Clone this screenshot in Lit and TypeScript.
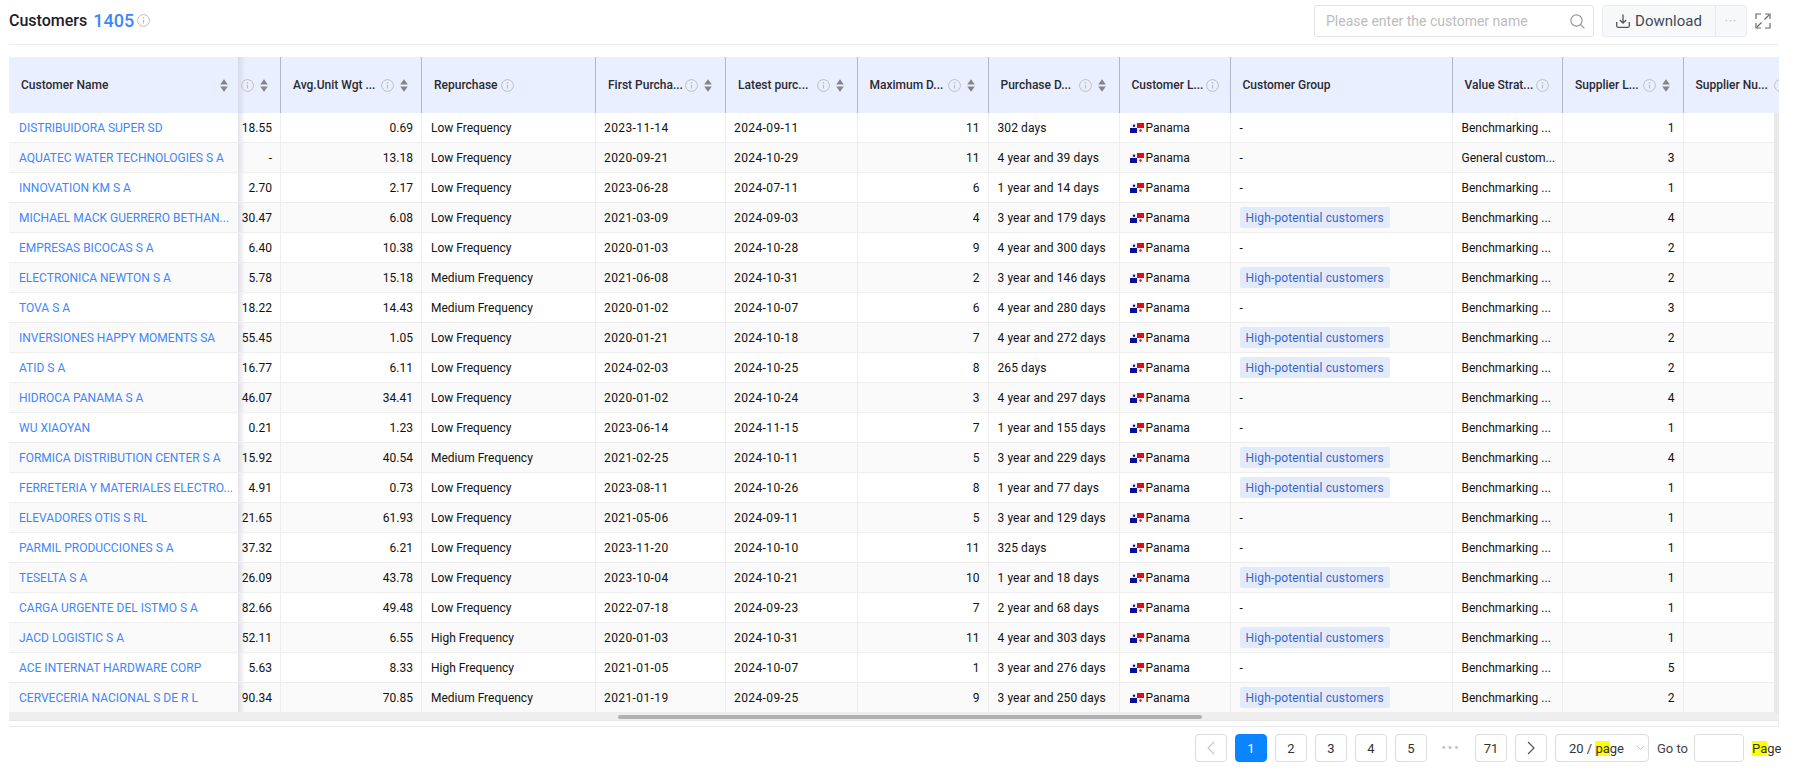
import { LitElement, html, css, svg } from "lit";
import { customElement } from "lit/decorators.js";

type R = [string, string, string, string, string, string, string, string, boolean, string, string];
const B = "Benchmarking ...";
const rows: R[] = [
  ["DISTRIBUIDORA SUPER SD","18.55","0.69","Low Frequency","2023-11-14","2024-09-11","11","302 days",false,B,"1"],
  ["AQUATEC WATER TECHNOLOGIES S A","-","13.18","Low Frequency","2020-09-21","2024-10-29","11","4 year and 39 days",false,"General custom...","3"],
  ["INNOVATION KM S A","2.70","2.17","Low Frequency","2023-06-28","2024-07-11","6","1 year and 14 days",false,B,"1"],
  ["MICHAEL MACK GUERRERO BETHAN...","30.47","6.08","Low Frequency","2021-03-09","2024-09-03","4","3 year and 179 days",true,B,"4"],
  ["EMPRESAS BICOCAS S A","6.40","10.38","Low Frequency","2020-01-03","2024-10-28","9","4 year and 300 days",false,B,"2"],
  ["ELECTRONICA NEWTON S A","5.78","15.18","Medium Frequency","2021-06-08","2024-10-31","2","3 year and 146 days",true,B,"2"],
  ["TOVA S A","18.22","14.43","Medium Frequency","2020-01-02","2024-10-07","6","4 year and 280 days",false,B,"3"],
  ["INVERSIONES HAPPY MOMENTS SA","55.45","1.05","Low Frequency","2020-01-21","2024-10-18","7","4 year and 272 days",true,B,"2"],
  ["ATID S A","16.77","6.11","Low Frequency","2024-02-03","2024-10-25","8","265 days",true,B,"2"],
  ["HIDROCA PANAMA S A","46.07","34.41","Low Frequency","2020-01-02","2024-10-24","3","4 year and 297 days",false,B,"4"],
  ["WU XIAOYAN","0.21","1.23","Low Frequency","2023-06-14","2024-11-15","7","1 year and 155 days",false,B,"1"],
  ["FORMICA DISTRIBUTION CENTER S A","15.92","40.54","Medium Frequency","2021-02-25","2024-10-11","5","3 year and 229 days",true,B,"4"],
  ["FERRETERIA Y MATERIALES ELECTRO...","4.91","0.73","Low Frequency","2023-08-11","2024-10-26","8","1 year and 77 days",true,B,"1"],
  ["ELEVADORES OTIS S RL","21.65","61.93","Low Frequency","2021-05-06","2024-09-11","5","3 year and 129 days",false,B,"1"],
  ["PARMIL PRODUCCIONES S A","37.32","6.21","Low Frequency","2023-11-20","2024-10-10","11","325 days",false,B,"1"],
  ["TESELTA S A","26.09","43.78","Low Frequency","2023-10-04","2024-10-21","10","1 year and 18 days",true,B,"1"],
  ["CARGA URGENTE DEL ISTMO S A","82.66","49.48","Low Frequency","2022-07-18","2024-09-23","7","2 year and 68 days",false,B,"1"],
  ["JACD LOGISTIC S A","52.11","6.55","High Frequency","2020-01-03","2024-10-31","11","4 year and 303 days",true,B,"1"],
  ["ACE INTERNAT HARDWARE CORP","5.63","8.33","High Frequency","2021-01-05","2024-10-07","1","3 year and 276 days",false,B,"5"],
  ["CERVECERIA NACIONAL S DE R L","90.34","70.85","Medium Frequency","2021-01-19","2024-09-25","9","3 year and 250 days",true,B,"2"],
];

const info = svg`<svg class="info" viewBox="0 0 13 13"><circle cx="6.5" cy="6.5" r="5.9" fill="none" stroke="#bfbfbf"/><circle cx="6.5" cy="3.9" r=".8" fill="#bfbfbf"/><path d="M6.5 5.8v3.7" stroke="#bfbfbf" stroke-width="1.2" fill="none"/></svg>`;
const sort = svg`<svg class="sort" viewBox="0 0 8 13"><path d="M4 0.3 7.8 5.4H.2z" fill="#858585"/><path d="M4 12.7.2 7.6H7.8z" fill="#858585"/></svg>`;
const flag = svg`<svg class="flag" viewBox="0 0 14 10"><rect width="14" height="10" fill="#f4f4f8"/><rect x="7" width="7" height="5" fill="#d8101c"/><rect y="5" width="7" height="5" fill="#0a108f"/><circle cx="4" cy="2.7" r="1.2" fill="#0a108f"/><circle cx="10.5" cy="7.5" r="1.2" fill="#d8101c"/></svg>`;

interface H { t: string; i?: boolean; s?: boolean; cls?: string }
const heads: H[] = [
  { t: "Customer Name", s: true },
  { t: "", i: true, s: true },
  { t: "Avg.Unit Wgt ...", i: true, s: true },
  { t: "Repurchase", i: true, cls: "tight" },
  { t: "First Purcha...", i: true, s: true },
  { t: "Latest purc...", i: true, s: true },
  { t: "Maximum D...", i: true, s: true },
  { t: "Purchase D...", i: true, s: true },
  { t: "Customer L...", i: true, cls: "tight" },
  { t: "Customer Group" },
  { t: "Value Strat...", i: true },
  { t: "Supplier L...", i: true, s: true },
  { t: "Supplier Nu...", i: true },
];

@customElement("app-root")
export class AppRoot extends LitElement {
  static styles = css`
    :host { display: block; width: 1794px; height: 773px; overflow: hidden; background: #fff; font-family: Roboto, "Liberation Sans", sans-serif; font-size: 12px; color: #111; }
    .page { padding: 0 15px 0 9px; }
    .top { display: flex; align-items: center; border-bottom: 1px solid #ececec; padding-bottom: 2px; box-sizing: border-box; height: 45px; margin-bottom: 12px; }
    .title { font-size: 16px; font-weight: 500; color: #1c1c2b; margin-bottom: 2px; }
    .count { font-size: 18px; font-weight: 500; color: #3d86ff; margin-left: 6px; margin-bottom: 2px; }
    .top .info { margin-left: 3px; margin-bottom: 2px; }
    .spacer { flex: 1; }
    .search { width: 280px; height: 32px; box-sizing: border-box; border: 1px solid #e3e3e3; border-radius: 3px; display: flex; align-items: center; padding: 0 8px 0 11px; color: #bdbdbd; font-size: 14px; justify-content: space-between; }
    .btn { margin-left: 8px; display: flex; height: 32px; box-sizing: border-box; border: 1px solid #ebedf0; border-radius: 3px; background: #f7f8fa; align-items: center; color: #3f4a59; font-size: 15px; }
    .dl { width: 113px; box-sizing: border-box; height: 100%; display: flex; align-items: center; justify-content: center; gap: 5px; border-right: 1px solid #e6e8eb; }
    .more { width: 30px; text-align: center; color: #bbb; letter-spacing: 1px; font-size: 12px; }
    .expand { margin: 0 8px; width: 16px; height: 16px; flex: none; }

    .table { position: relative; width: 1770px; overflow: hidden; }
    .row { display: grid; grid-template-columns: 229px 43px 141px 174px 130px 131.5px 131px 131px 111px 222px 110.5px 120.5px 95.5px; }
    .head { height: 56px; background: #e9effe; }
    .hc { display: flex; align-items: center; padding: 0 13px 0 12px; gap: 6px; border-right: 1px solid #b4b7c9; min-width: 0; overflow: hidden; font-weight: 500; font-size: 12px; color: #2a2a33; white-space: nowrap; position: relative; box-sizing: border-box; height: 56px; }
    .hc.tight { gap: 3px; }
    .hc span { flex: 1; min-width: 0; }
    .hc.tight span { flex: none; }
    .hc.first { background: #e9effe; padding-right: 10px; border-right: 0; }
    .hc.stub { justify-content: flex-end; padding: 0 12px 0 0; }
    .hc.stub span { display: none; }
    .hc.last { border-right: 0; padding-right: 0; }
    .hc.last span { flex: none; }
    .body .row { height: 30px; }
    .body .row:nth-child(even) > div { background: #fafafa; }
    .c { display: flex; align-items: center; padding: 0 9px; border-right: 1px solid #eeeeee; border-bottom: 1px solid #eeeeee; box-sizing: border-box; height: 30px; min-width: 0; white-space: nowrap; overflow: hidden; background: #fff; }
    .c.num { justify-content: flex-end; padding-right: 8px; }
    .c.stub { padding-left: 0; }
    .c.name { padding: 0 5px 0 10px; color: #3d86ff; border-right: 0; }
    .c.date { letter-spacing: .4px; padding-left: 8px; }
    .c.dur { letter-spacing: .1px; }
    .c.loc { padding-left: 10px; }
    .c.last { border-right: 0; }
    .first-col { position: relative; z-index: 1; overflow: visible; }
    .first-col::after { content: ""; position: absolute; top: 0; bottom: 0; right: -7px; width: 7px; background: linear-gradient(to right, rgba(190,190,205,.45), rgba(190,190,205,0)); pointer-events: none; }
    .flag { width: 14px; height: 10px; margin-right: 2px; flex: none; }
    .tag { background: #e3ebfb; color: #3f64c6; height: 21px; display: flex; align-items: center; padding: 0 6px; border-radius: 2px; letter-spacing: .15px; }
    .info { width: 13px; height: 13px; flex: none; }
    .sort { width: 8px; height: 13px; flex: none; }
    .vbar { position: absolute; right: 0; top: 56px; width: 5px; bottom: 7px; background: #e9e9e9; z-index: 2; }
    .hbar { height: 7px; background: #eeeeee; position: relative; }
    .thumb { position: absolute; left: 609px; width: 584px; top: 2px; height: 4px; background: #b0b0b0; border-radius: 2px; }
    .gap { border-top: 1px solid #e6e6e6; border-bottom: 1px solid #ececec; border-right: 1px solid #ececec; width: 1770px; box-sizing: border-box; height: 7px; }

    .pager { display: flex; align-items: center; margin-top: 7px; width: 1770px; height: 28px; justify-content: flex-end; font-size: 13px; }
    .pb { width: 32px; height: 28px; box-sizing: border-box; border: 1px solid #dcdcdc; border-radius: 4px; margin-right: 8px; display: flex; align-items: center; justify-content: center; color: #333; }
    .pb.on { background: #0a84ff; border-color: #0a84ff; color: #fff; }
    .dots { width: 32px; margin-right: 8px; text-align: center; color: #c4c4c4; letter-spacing: 2px; font-weight: 700; font-size: 12px; }
    .size { width: 94px; height: 28px; box-sizing: border-box; border: 1px solid #dcdcdc; border-radius: 4px; display: flex; align-items: center; padding-left: 13px; gap: 12px; color: #333; margin-right: 8px; }
    .goto { color: #444; margin-right: 8px; white-space: nowrap; width: 29px; }
    .inp { width: 50px; height: 28px; box-sizing: border-box; border: 1px solid #dcdcdc; border-radius: 4px; margin-right: 8px; }
    .pagew { white-space: nowrap; color: #333; width: 27px; }
    mark { background: #ffff00; color: inherit; }
  `;

  render() {
    return html`<div class="page">
      <div class="top">
        <div class="title">Customers</div><div class="count">1405</div>${info}
        <div class="spacer"></div>
        <div class="search">Please enter the customer name
          <svg width="15" height="15" viewBox="0 0 15 15" fill="none" stroke="#9a9a9a" stroke-width="1.2"><circle cx="6.5" cy="6.5" r="5.6"/><path d="M10.6 10.6l3.8 3.8"/></svg>
        </div>
        <div class="btn"><div class="dl">
          <svg width="14" height="14" viewBox="0 0 14 14" fill="none" stroke="#555" stroke-width="1.3"><path d="M7 .5V9M3.800 6 7 9.200 10.200 6M.7 8v3.800c0 .8.5 1.500 1.300 1.500h10c.8 0 1.300-.7 1.300-1.500V8"/></svg>Download</div>
          <div class="more">···</div></div>
        <svg class="expand" viewBox="0 0 16 16" fill="none" stroke="#666" stroke-width="1.2"><path d="M1 6V1h5M10 1h5v5M15 10v5h-5M6 15H1v-5"/><path d="M9.500 6.500 14 2M6.500 9.500 2 14"/></svg>
      </div>
      <div class="table">
        <div class="row head">
          ${heads.map((h, i) => html`<div class="hc ${h.cls ?? ""} ${i === 0 ? "first first-col" : ""} ${i === 1 ? "stub" : ""} ${i === 12 ? "last" : ""}"><span>${h.t}</span>${h.i ? info : ""}${h.s ? sort : ""}</div>`)}
        </div>
        <div class="body">
          ${rows.map((r) => html`<div class="row">
            <div class="c name first-col"><span>${r[0]}</span></div>
            <div class="c num stub">${r[1]}</div>
            <div class="c num">${r[2]}</div>
            <div class="c">${r[3]}</div>
            <div class="c date">${r[4]}</div>
            <div class="c date">${r[5]}</div>
            <div class="c num">${r[6]}</div>
            <div class="c dur">${r[7]}</div>
            <div class="c loc">${flag}Panama</div>
            <div class="c">${r[8] ? html`<div class="tag">High-potential customers</div>` : "-"}</div>
            <div class="c">${r[9]}</div>
            <div class="c num">${r[10]}</div>
            <div class="c last"></div>
          </div>`)}
        </div>
        <div class="hbar"><div class="thumb"></div></div>
        <div class="vbar"></div>
      </div>
      <div class="gap"></div>
      <div class="pager">
        <div class="pb"><svg width="10" height="14" viewBox="0 0 10 14" fill="none" stroke="#c8c8c8" stroke-width="1.2"><path d="M8 1 2 7l6 6"/></svg></div>
        <div class="pb on">1</div><div class="pb">2</div><div class="pb">3</div><div class="pb">4</div><div class="pb">5</div>
        <div class="dots">•••</div>
        <div class="pb">71</div>
        <div class="pb"><svg width="10" height="14" viewBox="0 0 10 14" fill="none" stroke="#555" stroke-width="1.2"><path d="M2 1l6 6-6 6"/></svg></div>
        <div class="size"><span>20 / <mark>pa</mark>ge</span><svg width="9" height="6" viewBox="0 0 9 6" fill="none" stroke="#c4c4c4"><path d="M1 1l3.500 3.500L8 1"/></svg></div>
        <div class="goto">Go to</div>
        <div class="inp"></div>
        <div class="pagew"><mark>Pa</mark>ge</div>
      </div>
    </div>`;
  }
}
